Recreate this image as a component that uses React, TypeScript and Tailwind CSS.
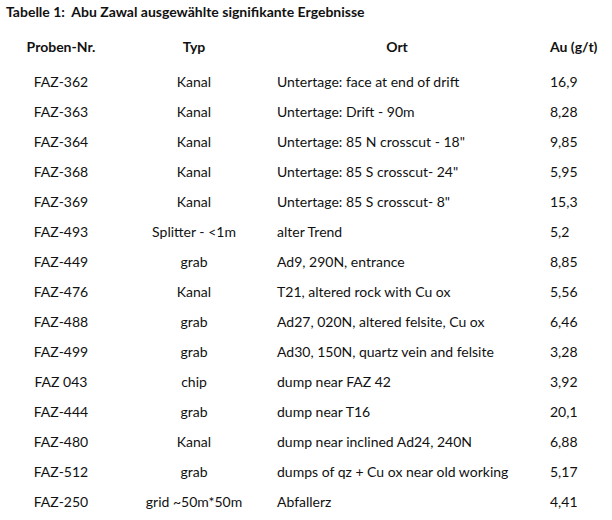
const rows: [string, string, string, string][] = [
  ["FAZ-362", "Kanal", "Untertage: face at end of drift", "16,9"],
  ["FAZ-363", "Kanal", "Untertage: Drift - 90m", "8,28"],
  ["FAZ-364", "Kanal", "Untertage: 85 N crosscut - 18\"", "9,85"],
  ["FAZ-368", "Kanal", "Untertage: 85 S crosscut- 24\"", "5,95"],
  ["FAZ-369", "Kanal", "Untertage: 85 S crosscut- 8\"", "15,3"],
  ["FAZ-493", "Splitter - <1m", "alter Trend", "5,2"],
  ["FAZ-449", "grab", "Ad9, 290N, entrance", "8,85"],
  ["FAZ-476", "Kanal", "T21, altered rock with Cu ox", "5,56"],
  ["FAZ-488", "grab", "Ad27, 020N, altered felsite, Cu ox", "6,46"],
  ["FAZ-499", "grab", "Ad30, 150N, quartz vein and felsite", "3,28"],
  ["FAZ 043", "chip", "dump near FAZ 42", "3,92"],
  ["FAZ-444", "grab", "dump near T16", "20,1"],
  ["FAZ-480", "Kanal", "dump near inclined Ad24, 240N", "6,88"],
  ["FAZ-512", "grab", "dumps of qz + Cu ox near old working", "5,17"],
  ["FAZ-250", "grid ~50m*50m", "Abfallerz", "4,41"],
];

export default function App() {
  return (
    <div className="h-[520px] w-[612px] bg-white font-['Lato',sans-serif] text-[14px] text-[#111]">
      <h1 className="h-[26px] pl-[6px] pt-[2px] text-[14px] font-bold leading-[20px]">
        Tabelle 1:&nbsp; Abu Zawal ausgewählte signifikante Ergebnisse
      </h1>
      <table className="w-full table-fixed border-collapse">
        <colgroup>
          <col className="w-[122px]" />
          <col className="w-[144px]" />
          <col className="w-[284px]" />
          <col />
        </colgroup>
        <thead>
          <tr className="h-[40px] font-bold">
            <th className="text-center font-bold">Proben-Nr.</th>
            <th className="text-center font-bold">Typ</th>
            <th className="pl-[11px] pr-[33px] text-center font-bold">Ort</th>
            <th className="text-left font-bold">Au (g/t)</th>
          </tr>
        </thead>
        <tbody>
          {rows.map(([id, typ, ort, au]) => (
            <tr key={id} className="h-[30px]">
              <td className="text-center">{id}</td>
              <td className="text-center">{typ}</td>
              <td className="pl-[11px] text-left">{ort}</td>
              <td className="text-left">{au}</td>
            </tr>
          ))}
        </tbody>
      </table>
    </div>
  );
}
